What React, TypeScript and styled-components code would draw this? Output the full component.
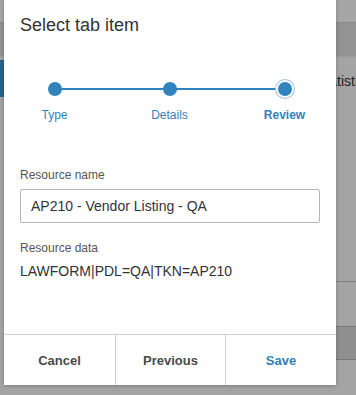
import React from "react";
import styled, { createGlobalStyle } from "styled-components";

const Global = createGlobalStyle`
  html, body { margin: 0; padding: 0; }
  body {
    width: 356px;
    height: 395px;
    overflow: hidden;
    background: #a3a3a3;
    font-family: "Liberation Sans", Arial, sans-serif;
  }
`;

const Page = styled.div`
  position: relative;
  width: 356px;
  height: 395px;
  overflow: hidden;
  background: #a4a4a4;
  display: flex;
  flex-direction: column;
`;

const TopStrip = styled.div`
  height: 22px;
  background: #a6a6a6;
  border-bottom: 1px solid #8a8a8a;
`;

const HeaderBand = styled.div`
  height: 33px;
  background: #939393;
  border-bottom: 1px solid #9a9a9a;
`;

const BodyArea = styled.div`
  display: flex;
  flex: 1;
  min-width: 0;
`;

const NavCol = styled.div`
  width: 4px;
  flex: none;
  display: flex;
  flex-direction: column;
  padding-top: 3px;
`;

const NavActive = styled.div`
  height: 37px;
  background: #2b6388;
`;

const Content = styled.div`
  flex: 1;
  min-width: 0;
  overflow: hidden;
  display: flex;
  flex-direction: column;
`;

const BgText = styled.div`
  margin: 16px 0 0 312px;
  font-size: 14px;
  color: #1e1e1e;
  white-space: nowrap;
`;

const BgRule = styled.div`
  margin: 192px 0 0 332px;
  height: 1px;
  background: #7d7d7d;
`;

const BgBand = styled.div`
  margin: 44px 0 0 332px;
  height: 32px;
  background: #8f8f8f;
  border-top: 1px solid #7a7a7a;
  border-bottom: 1px solid #7a7a7a;
`;

const Dialog = styled.div`
  position: absolute;
  left: 4px;
  top: 0;
  width: 332px;
  height: 385px;
  background: #ffffff;
  box-shadow: 0 1px 4px rgba(0, 0, 0, 0.25);
  display: flex;
  flex-direction: column;
`;

const Title = styled.h1`
  margin: 0;
  padding: 14px 0 0 16px;
  font-size: 18px;
  font-weight: normal;
  color: #333333;
  line-height: 22px;
`;

const Stepper = styled.div`
  position: relative;
  margin: 40px 0 0 0;
  height: 44px;
`;

const Track = styled.div`
  position: absolute;
  left: 50px;
  width: 230px;
  top: 12px;
  height: 2px;
  background: #3183bd;
`;

const Steps = styled.div`
  position: relative;
  display: grid;
  grid-template-columns: repeat(3, 115px);
  margin-left: -7px;
`;

const Step = styled.div`
  display: flex;
  flex-direction: column;
  align-items: center;
`;

const DotWrap = styled.div`
  width: 22px;
  height: 22px;
  margin-top: 2px;
  display: flex;
  align-items: center;
  justify-content: center;
`;

const Dot = styled.div<{ $current?: boolean }>`
  width: 14px;
  height: 14px;
  border-radius: 50%;
  background: #3183bd;
  box-shadow: ${(p) =>
    p.$current ? "0 0 0 2px #ffffff, 0 0 0 3px #9cc3e3" : "none"};
`;

const StepLabel = styled.div<{ $current?: boolean }>`
  margin-top: 8px;
  font-size: 12px;
  font-weight: ${(p) => (p.$current ? "bold" : "normal")};
  color: #3183bd;
  line-height: 14px;
`;

const Form = styled.div`
  padding: 48px 16px 0 16px;
  display: flex;
  flex-direction: column;
`;

const FieldLabel = styled.div`
  font-size: 12px;
  color: #555555;
  line-height: 14px;
`;

const Input = styled.input`
  margin-top: 7px;
  box-sizing: border-box;
  width: 300px;
  height: 34px;
  border: 1px solid #b5b5b5;
  border-radius: 2px;
  padding: 0 10px;
  font-family: "Liberation Sans", Arial, sans-serif;
  font-size: 14px;
  color: #333333;
  outline: none;
`;

const DataLabel = styled(FieldLabel)`
  margin-top: 18px;
`;

const DataValue = styled.div`
  margin-top: 8px;
  font-size: 14px;
  color: #333333;
  line-height: 16px;
`;

const Spacer = styled.div`
  flex: 1;
`;

const Footer = styled.div`
  display: grid;
  grid-template-columns: 111px 110px 111px;
  height: 50px;
  border-top: 1px solid #d0d0d0;
`;

const FooterButton = styled.button<{ $primary?: boolean }>`
  border: none;
  border-left: 1px solid #d0d0d0;
  &:first-child { border-left: none; }
  background: #ffffff;
  font-family: "Liberation Sans", Arial, sans-serif;
  font-size: 13px;
  font-weight: bold;
  color: ${(p) => (p.$primary ? "#2f7fb5" : "#4a4a4a")};
  padding: 0;
  cursor: pointer;
`;

export default function App() {
  const steps = [
    { label: "Type" },
    { label: "Details" },
    { label: "Review", current: true },
  ];
  return (
    <>
      <Global />
      <Page>
        <TopStrip />
        <HeaderBand />
        <BodyArea>
          <NavCol>
            <NavActive />
          </NavCol>
          <Content>
            <BgText>Statistics</BgText>
            <BgRule />
            <BgBand />
          </Content>
        </BodyArea>
        <Dialog>
          <Title>Select tab item</Title>
          <Stepper>
            <Track />
            <Steps>
              {steps.map((s) => (
                <Step key={s.label}>
                  <DotWrap>
                    <Dot $current={s.current} />
                  </DotWrap>
                  <StepLabel $current={s.current}>{s.label}</StepLabel>
                </Step>
              ))}
            </Steps>
          </Stepper>
          <Form>
            <FieldLabel>Resource name</FieldLabel>
            <Input defaultValue="AP210 - Vendor Listing - QA" />
            <DataLabel>Resource data</DataLabel>
            <DataValue>LAWFORM|PDL=QA|TKN=AP210</DataValue>
          </Form>
          <Spacer />
          <Footer>
            <FooterButton>Cancel</FooterButton>
            <FooterButton>Previous</FooterButton>
            <FooterButton $primary>Save</FooterButton>
          </Footer>
        </Dialog>
      </Page>
    </>
  );
}
